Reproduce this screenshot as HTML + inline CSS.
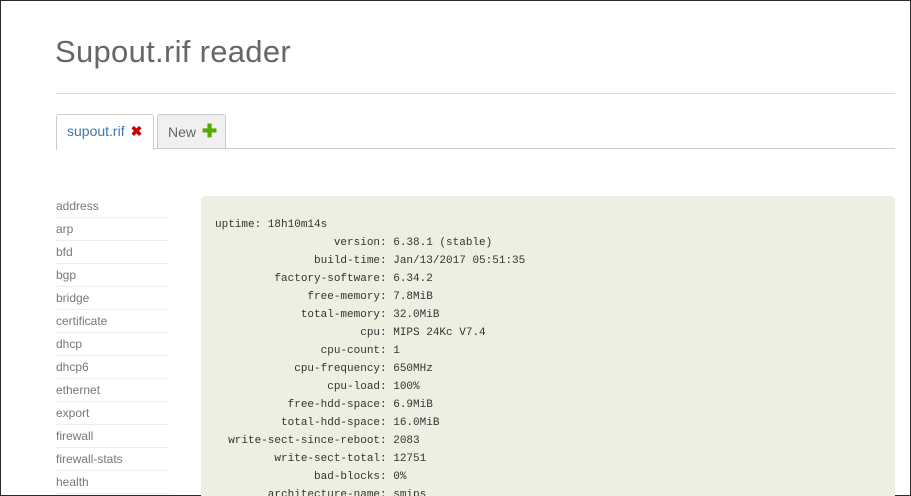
<!DOCTYPE html>
<html><head><style>
*{margin:0;padding:0;box-sizing:border-box}
html,body{width:911px;height:496px;overflow:hidden;background:#fff}
body{border:1px solid #2a2a2a;position:relative;font-family:"Liberation Sans",sans-serif}
h1{position:absolute;left:54px;top:33px;font-size:31px;font-weight:normal;color:#666;letter-spacing:0.3px}
.hr{position:absolute;left:55px;top:92px;width:839px;height:1px;background:#ddd}
.tabline{position:absolute;left:55px;top:147px;width:839px;height:1px;background:#ccc}
.tab{position:absolute;top:113px;height:35px;border:1px solid #ccc;border-bottom:none;border-radius:3px 3px 0 0;font-size:14px;line-height:32px;padding-left:10px}
.t1{left:55px;width:98px;background:#fff;color:#3a78b0;height:36px;z-index:2}
.t2{left:156px;width:69px;background:#f0f0f0;color:#666}
.x{color:#c00;font-weight:bold;margin-left:6px}
.p{color:#5a0;font-weight:bold;font-size:18px;margin-left:6px}
ul{position:absolute;left:55px;top:194px;width:113px;list-style:none}
li{height:23px;line-height:23px;font-size:12px;color:#777;border-bottom:1px solid #eee}
.box{position:absolute;left:200px;top:195px;width:694px;height:320px;background:#eeefe3;border-radius:4px}
pre{position:absolute;left:214px;top:215px;font-family:"Liberation Mono",monospace;font-size:11px;line-height:18px;color:#333}
</style></head><body>
<h1>Supout.rif reader</h1>
<div class="hr"></div>
<div class="tab t1">supout.rif<span class="x">✖</span></div>
<div class="tab t2">New<span class="p">✚</span></div>
<div class="tabline"></div>
<ul><li>address</li><li>arp</li><li>bfd</li><li>bgp</li><li>bridge</li><li>certificate</li><li>dhcp</li><li>dhcp6</li><li>ethernet</li><li>export</li><li>firewall</li><li>firewall-stats</li><li>health</li></ul>
<div class="box"></div>
<pre>uptime: 18h10m14s
                  version: 6.38.1 (stable)
               build-time: Jan/13/2017 05:51:35
         factory-software: 6.34.2
              free-memory: 7.8MiB
             total-memory: 32.0MiB
                      cpu: MIPS 24Kc V7.4
                cpu-count: 1
            cpu-frequency: 650MHz
                 cpu-load: 100%
           free-hdd-space: 6.9MiB
          total-hdd-space: 16.0MiB
  write-sect-since-reboot: 2083
         write-sect-total: 12751
               bad-blocks: 0%
        architecture-name: smips</pre>
</body></html>
